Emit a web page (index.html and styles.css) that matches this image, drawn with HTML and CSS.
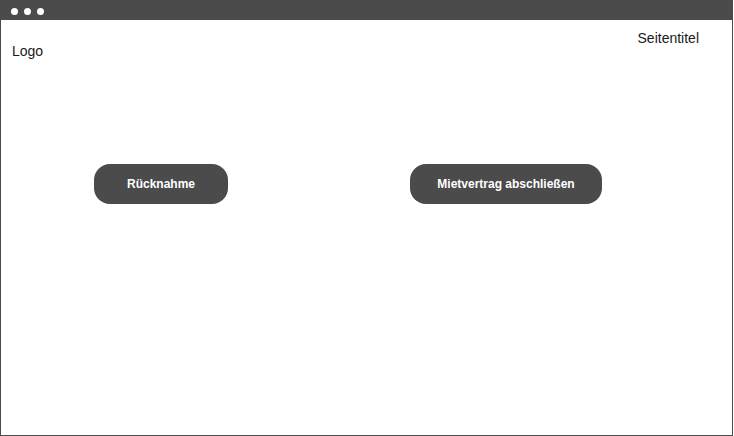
FILE: index.html
```html
<!DOCTYPE html>
<html lang="de">
<head>
<meta charset="utf-8">
<title>Seitentitel</title>
<link rel="stylesheet" href="styles.css">
</head>
<body>
<div class="frame">
  <div class="topbar">
    <span class="dot"></span><span class="dot"></span><span class="dot"></span>
  </div>
  <div class="header">
    <div class="logo">Logo</div>
    <div class="title">Seitentitel</div>
  </div>
  <div class="actions">
    <button class="btn btn-return">Rücknahme</button>
    <button class="btn btn-contract">Mietvertrag abschließen</button>
  </div>
</div>
</body>
</html>
```
FILE: styles.css
```css
html, body {
  margin: 0;
  padding: 0;
  background: #ffffff;
}
.frame {
  box-sizing: border-box;
  width: 733px;
  height: 436px;
  border: 1px solid #4b4b4b;
  border-top: 0;
  font-family: "Liberation Sans", Arial, sans-serif;
  color: #1a1a1a;
}
.topbar {
  height: 20px;
  margin: 0 -1px;
  background: #4b4b4b;
  display: flex;
  align-items: flex-start;
  gap: 6px;
  padding: 8px 0 0 11px;
  box-sizing: border-box;
}
.dot {
  width: 7px;
  height: 7px;
  border-radius: 50%;
  background: #ffffff;
}
.header {
  display: flex;
  justify-content: space-between;
  align-items: flex-start;
  padding: 0 33px 0 11px;
}
.logo {
  font-size: 14px;
  line-height: 16px;
  margin-top: 23px;
}
.title {
  font-size: 14px;
  line-height: 16px;
  margin-top: 10px;
}
.actions {
  display: flex;
  gap: 182px;
  padding-left: 93px;
  margin-top: 105px;
}
.btn {
  height: 40px;
  border: 0;
  border-radius: 16px;
  background: #4b4b4b;
  color: #ffffff;
  font-family: "Liberation Sans", Arial, sans-serif;
  font-weight: bold;
  font-size: 12px;
  padding: 0;
  margin: 0;
}
.btn-return {
  width: 134px;
}
.btn-contract {
  width: 192px;
}
```
